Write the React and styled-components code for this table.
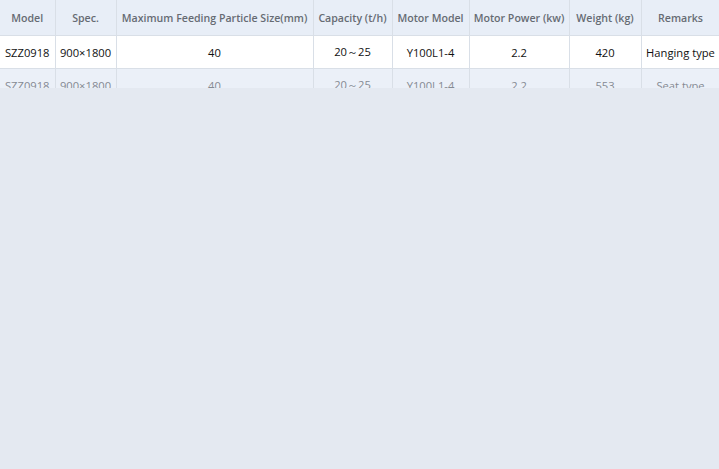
import React from 'react'
import styled, { createGlobalStyle } from 'styled-components'

const GlobalStyle = createGlobalStyle`
  html, body {
    margin: 0;
    padding: 0;
    background: #e4e9f1;
  }
  body {
    font-family: "Open Sans", "Liberation Sans", sans-serif;
  }
`

const TableClip = styled.div`
  height: 88px;
  overflow: hidden;
  width: 719px;
`

const SpecTable = styled.table`
  border-collapse: collapse;
  table-layout: fixed;
  width: 720px;
  font-size: 11.2px;
`

const HeadCell = styled.th`
  height: 35px;
  padding: 0;
  background: #e8eef7;
  color: #666b73;
  font-size: 10.6px;
  font-weight: 600;
  text-align: center;
  border: 1px solid #d9dfe7;
  border-top: none;
  white-space: nowrap;
  &:first-child { border-left: none; }
`

const Row = styled.tr`
  background: ${p => (p.$faded ? '#ebf0f8' : '#ffffff')};
  color: ${p => (p.$faded ? '#858a93' : '#111111')};
`

const Cell = styled.td`
  height: 32px;
  padding: 0;
  text-align: center;
  border: 1px solid #d9dfe7;
  white-space: nowrap;
  &:first-child { border-left: none; }
`

const columns = [
  { label: 'Model', width: 55 },
  { label: 'Spec.', width: 61 },
  { label: 'Maximum Feeding Particle Size(mm)', width: 197 },
  { label: 'Capacity (t/h)', width: 79 },
  { label: 'Motor Model', width: 77 },
  { label: 'Motor Power (kw)', width: 100 },
  { label: 'Weight (kg)', width: 72 },
  { label: 'Remarks', width: 79 },
]

const rows = [
  ['SZZ0918', '900×1800', '40', '20～25', 'Y100L1-4', '2.2', '420', 'Hanging type'],
  ['SZZ0918', '900×1800', '40', '20～25', 'Y100L1-4', '2.2', '553', 'Seat type'],
]

export default function App() {
  return (
    <>
      <GlobalStyle />
      <TableClip>
        <SpecTable>
          <colgroup>
            {columns.map(c => (
              <col key={c.label} style={{ width: c.width }} />
            ))}
          </colgroup>
          <thead>
            <tr>
              {columns.map(c => (
                <HeadCell key={c.label}>{c.label}</HeadCell>
              ))}
            </tr>
          </thead>
          <tbody>
            {rows.map((r, i) => (
              <Row key={i} $faded={i === 1}>
                {r.map((v, j) => (
                  <Cell key={j}>{v}</Cell>
                ))}
              </Row>
            ))}
          </tbody>
        </SpecTable>
      </TableClip>
    </>
  )
}
